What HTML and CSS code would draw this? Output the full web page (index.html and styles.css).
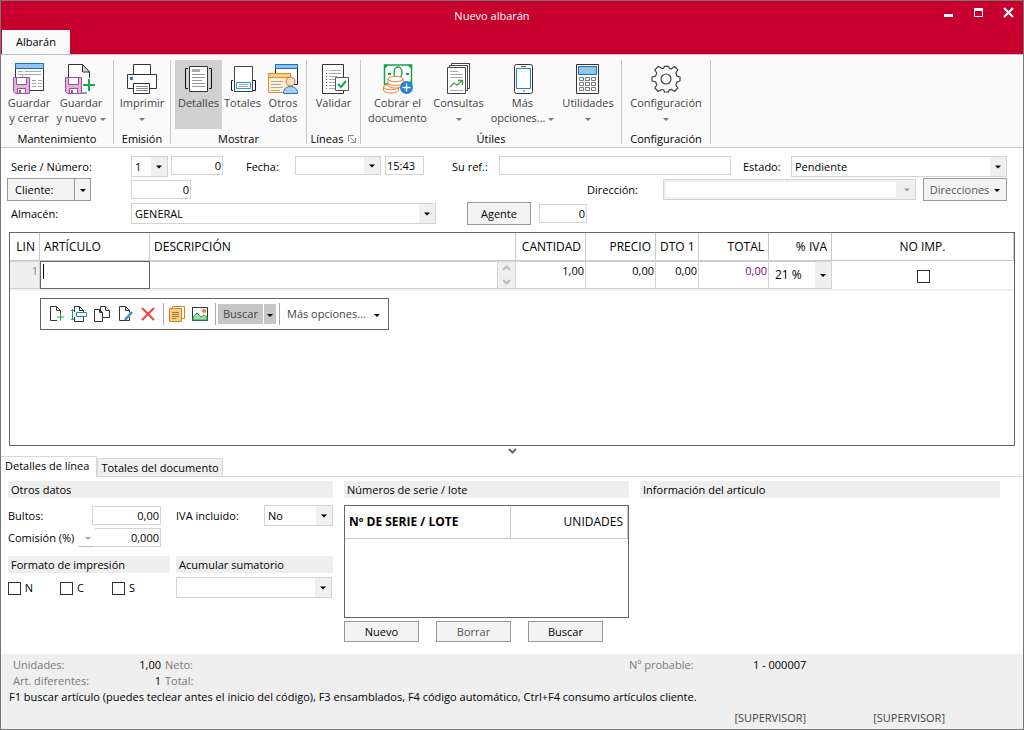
FILE: index.html
```html
<!DOCTYPE html>
<html lang="es">
<head>
<meta charset="utf-8">
<title>Nuevo albarán</title>
<link rel="stylesheet" href="styles.css">
</head>
<body>
<svg class="defs" aria-hidden="true">
  <symbol id="floppy" viewBox="0 0 17 17"><path d="M.5.5h16v16h-14l-2-2z" fill="#dfb4dd" stroke="#9b4f9b"/><path d="M3.500.5h10v7h-10z" fill="#fff" stroke="#9b4f9b"/><path d="M4.500 11.500h8v5h-8z" fill="#fff" stroke="#9b4f9b"/><path d="M6 13h2v3h-2z" fill="#9b4f9b"/></symbol>
</svg>
<div class="window">
  <header class="titlebar">
    <div class="caption">
      <h1>Nuevo albarán</h1>
      <div class="winbtns">
        <button aria-label="Minimizar"><svg width="11" height="11"><path d="M1 7h9v3H1z" fill="#fff"/></svg></button>
        <button aria-label="Maximizar"><svg width="11" height="11"><path d="M1.500 1.500h8v8h-8z" fill="none" stroke="#fff"/><path d="M1 1h9v3H1z" fill="#fff"/></svg></button>
        <button aria-label="Cerrar"><svg width="11" height="11"><path d="M1 1l9 9M10 1l-9 9" stroke="#fff" stroke-width="2.200"/></svg></button>
      </div>
    </div>
    <button class="maintab">Albarán</button>
  </header>

  <nav class="ribbon">
    <section class="group g-man">
      <div class="tools">
        <button class="tool"><svg viewBox="0 0 32 32"><path d="M2.500 1.500h28v27h-28z" fill="#fff" stroke="#333"/><path d="M2.500 1.500h28v5h-28z" fill="#8fc5ee" stroke="#1a6fb5"/><path d="M5 9.500h5M12 9.500h16M5 12.500h23M9.500 12v4M19 18.500h4M25 18.500h4M19 21.500h4M25 21.500h4M19 24.500h4M25 24.500h4" stroke="#aaa"/><use href="#floppy" x="0" y="15" width="17" height="17"/></svg><span>Guardar<br>y cerrar</span></button>
        <button class="tool"><svg viewBox="0 0 32 32"><path d="M3.500 31V2.500h14l7 7.500V31z" fill="#fff" stroke="#333"/><path d="M17.500 2.500v7.500h7z" fill="#ddd" stroke="#333"/><use href="#floppy" x="0" y="15" width="17" height="17"/><path d="M17 22h15v3H17zM22 16h4v16h-4z" fill="#fff"/><path d="M18 23h12M24 17v12" stroke="#17a84f" stroke-width="2"/></svg><span>Guardar<br>y nuevo <i class="arr"></i></span></button>
      </div>
      <h2>Mantenimiento</h2>
    </section>
    <section class="group g-emi">
      <div class="tools">
        <button class="tool"><svg viewBox="0 0 32 32"><path d="M7.500 2.500h17v10h-17zM1.500 12.500h29v14h-29z" fill="#fff" stroke="#333"/><path d="M7.500 21.500h16v10h-16z" fill="#fff" stroke="#333"/><path d="M10 24.500h12M10 26.500h12M10 28.500h12" stroke="#888"/><path d="M4 15h3v3H4z" fill="#1e83cc"/></svg><span>Imprimir<br><i class="arr"></i></span></button>
      </div>
      <h2>Emisión</h2>
    </section>
    <section class="group g-mos">
      <div class="tools">
        <button class="tool w47 active"><svg viewBox="0 0 32 32"><path d="M5 6.500H2.500v20H5M26 6.500h2.500v20H26" fill="none" stroke="#111"/><path d="M6.500 4.500h18v25h-18z" fill="#fff" stroke="#333"/><path d="M9 7h8v3H9z" fill="#aaa"/><path d="M9 12.500h13M9 15.500h13M9 18.500h10M9 21.500h13M9 24.500h13" stroke="#999"/></svg><span>Detalles</span></button>
        <button class="tool w41"><svg viewBox="0 0 32 32"><path d="M6 18.500H4.500v10H6M26 18.500h2.500v10H26" fill="none" stroke="#111"/><path d="M7.500 4.500h18v25h-18z" fill="#fff" stroke="#444"/><path d="M9.500 20.500h14v6h-14z" fill="#fff" stroke="#1e9be0"/><path d="M12 22.500h9M12 24.500h9" stroke="#aaa"/></svg><span>Totales</span></button>
        <button class="tool w40"><svg viewBox="0 0 32 32"><path d="M8.500 2.500h22v20h-22z" fill="#fff" stroke="#222"/><path d="M8.500 2.500h22v4h-22z" fill="#8fc5ee" stroke="#1a6fb5"/><path d="M1.500 11.500h22v19h-22z" fill="#fff0d5" stroke="#e08a2d"/><path d="M1.500 11.500h22v4h-22z" fill="#f9cf86" stroke="#e08a2d"/><path d="M4 19.500h12M4 22.500h10M4 25.500h12M4 28.500h9" stroke="#aaa"/><path d="M16.500 31.500c0-5 3-7 7-7s7 2 7 7z" fill="#a5cdec" stroke="#2478b5"/><circle cx="23.500" cy="19.500" r="4.500" fill="#fadfc5" stroke="#b9683a"/></svg><span>Otros<br>datos</span></button>
      </div>
      <h2>Mostrar</h2>
    </section>
    <section class="group g-lin">
      <div class="tools">
        <button class="tool"><svg viewBox="0 0 32 32"><path d="M4.500 2.500h21v29h-21z" fill="#fff" stroke="#333"/><path d="M11 8.500h12M11 11.500h12M11 14.500h8M11 17.500h7M11 20.500h7M11 23.500h7M11 26.500h9" stroke="#aaa"/><path d="M8 8h1v1H8zM8 14h1v1H8zM8 20h1v1H8zM8 26h1v1H8z" fill="#17a84f"/><path d="M8 11h1v1H8zM8 17h1v1H8zM8 23h1v1H8z" fill="#d02"/><path d="M17.500 15.500h13v13h-13z" fill="#fff" stroke="#555"/><path d="M20 22l3 3 5-6" fill="none" stroke="#17a84f" stroke-width="2"/></svg><span>Validar</span></button>
      </div>
      <h2>Líneas <svg class="launch" width="8" height="8"><path d="M.5 6V.5H6M2.500 2.500l4 4M3 7.500h4.500V3" fill="none" stroke="#888"/></svg></h2>
    </section>
    <section class="group g-uti">
      <div class="tools">
        <button class="tool w65"><svg viewBox="0 0 32 32"><path d="M2.500 3h27v19h-27z" fill="#fff" stroke="#13a04a" stroke-width="1.500"/><path d="M2.500 3h4l-4 4zM29.500 3v4l-4-4zM29.500 22v-4l-4 4z" fill="#13a04a"/><ellipse cx="16" cy="10.500" rx="4" ry="5.500" fill="#fff" stroke="#13a04a" stroke-width="1.400"/><path d="M6 11h3v2H6zM24 11h3v2h-3z" fill="#13a04a"/><g fill="#fff" stroke="#ee7d33"><path d="M1.500 25v3c0 4 15 4 15 0v-3"/><ellipse cx="9" cy="25" rx="7.500" ry="2.700"/><path d="M6 20.500v2.500c0 4 15 4 15 0v-2.500"/><path d="M6 17v3.500c0 4 15 4 15 0V17"/><ellipse cx="13.500" cy="17" rx="7.500" ry="2.700"/></g><circle cx="24.500" cy="25.500" r="6.500" fill="#1e83cc"/><path d="M20.500 25.500h8M24.500 21.500v8" stroke="#fff" stroke-width="1.500"/></svg><span>Cobrar el<br>documento</span></button>
        <button class="tool w57"><svg viewBox="0 0 32 32"><g fill="#fff" stroke="#444"><path d="M8.500 1.500h18v25h-18z"/><path d="M6.500 3.500h18v25h-18z"/><path d="M4.500 5.500h18v26h-18z"/></g><path d="M7 9.500h8M7 12.500h13M7 15.500h13M7 28.500h13" stroke="#aaa"/><path d="M7 25l4-4 3 2 5-4M15 18.500h4.500V23" fill="none" stroke="#36a537" stroke-width="1.300"/></svg><span>Consultas<br><i class="arr"></i></span></button>
        <button class="tool w71"><svg viewBox="0 0 32 32"><rect x="7.500" y="2.500" width="18" height="29" rx="2" fill="#fff" stroke="#333"/><path d="M9.500 6.500h14v20h-14z" fill="#fff" stroke="#1e83cc"/><path d="M14 4.500h5M16 29h2" stroke="#555"/></svg><span>Más<br>opciones... <i class="arr"></i></span></button>
        <button class="tool w60"><svg viewBox="0 0 32 32"><path d="M4.500 2.500h22v29h-22z" fill="#fff" stroke="#333"/><path d="M6.500 4.500h18v8h-18z" fill="#8fc5ee" stroke="#1a6fb5"/><path d="M7.500 15.500h4v3h-4zM13.500 15.500h4v3h-4zM19.500 15.500h4v3h-4zM7.500 20.500h4v3h-4zM13.500 20.500h4v3h-4zM19.500 20.500h4v3h-4zM7.500 25.500h4v3h-4zM13.500 25.500h4v3h-4zM19.500 25.500h4v3h-4z" fill="#fff" stroke="#777"/></svg><span>Utilidades<br><i class="arr"></i></span></button>
      </div>
      <h2>Útiles</h2>
    </section>
    <section class="group g-cfg">
      <div class="tools">
        <button class="tool"><svg viewBox="0 0 32 32"><g fill="#fff" stroke="#444" stroke-width="1.200"><path d="M2 15l3.500-.8 1.300-3.200-2-3 3.500-3.700 3.200 2h2.200l.8-2h4l.8 2 2.200.5 3-2.300 3.300 3.200-2 3.300 1.200 3.200 3 .8v4l-3 .8-1.200 3.200 2 3-3.300 3.500-3-2.200-2.200.5-.8 2.200h-4l-.8-2.200-2.200-.3-3.200 2-3.500-3.500 2-3-1.300-3.200L2 19z" stroke-linejoin="round"/><circle cx="16" cy="17" r="5"/></g></svg><span>Configuración<br><i class="arr"></i></span></button>
      </div>
      <h2>Configuración</h2>
    </section>
  </nav>

  <main>
    <form class="head">
      <div class="row top">
        <label class="first" for="serie">Serie / Número:</label>
        <select id="serie" class="w36"><option>1</option></select>
        <input class="num w52" aria-label="Número" value="0">
        <label class="fecha" for="fecha">Fecha:</label>
        <select id="fecha" class="w86"><option></option></select>
        <input class="w39" aria-label="Hora" value="15:43">
        <label class="ref" for="ref">Su ref.:</label>
        <input id="ref" class="grow">
        <label class="estado" for="estado">Estado:</label>
        <select id="estado" class="w216"><option>Pendiente</option></select>
      </div>
      <div class="row">
        <div class="client"><button type="button" class="btn">Cliente:</button><button type="button" class="btn drop" aria-label="Opciones de cliente"><i class="arr dark"></i></button></div>
        <input class="num w60" aria-label="Cliente" value="0">
        <label class="dir" for="dir">Dirección:</label>
        <select id="dir" class="w252" disabled><option></option></select>
        <button type="button" class="btn dim w84">Direcciones <i class="arr dark"></i></button>
      </div>
      <div class="row">
        <label class="first" for="alm">Almacén:</label>
        <select id="alm" class="w305"><option>GENERAL</option></select>
        <button type="button" class="btn agent">Agente</button>
        <input class="num w48" aria-label="Agente" value="0">
      </div>
    </form>

    <div class="lines">
      <table>
        <colgroup><col class="c30"><col class="c110"><col><col class="c18"><col class="c70"><col class="c70"><col class="c43"><col class="c70"><col class="c63"><col class="c182"></colgroup>
        <thead><tr><th class="r">LIN</th><th>ARTÍCULO</th><th colspan="2">DESCRIPCIÓN</th><th class="r">CANTIDAD</th><th class="r">PRECIO</th><th class="r">DTO 1</th><th class="r">TOTAL</th><th class="r">% IVA</th><th class="c">NO IMP.</th></tr></thead>
        <tbody><tr>
          <td class="lin r">1</td>
          <td class="edit"><input aria-label="Artículo"><i class="caret"></i></td>
          <td><input aria-label="Descripción"></td>
          <td class="spin"><svg width="9" height="24"><path d="M1 7l3.500-3.500L8 7M1 17l3.500 3.500L8 17" fill="none" stroke="#bbb" stroke-width="2"/></svg></td>
          <td class="r">1,00</td><td class="r">0,00</td><td class="r">0,00</td><td class="r purple">0,00</td>
          <td class="iva"><select aria-label="% IVA"><option>21 %</option></select></td>
          <td class="chk c"><input type="checkbox" aria-label="No imprimir"></td>
        </tr></tbody>
      </table>
      <div class="linebar">
        <button aria-label="Nueva línea"><svg viewBox="0 0 18 18"><path d="M10 15.500H3.500v-14h6l4 4V9" fill="#fff" stroke="#333"/><path d="M9.500 1.500v4h4" fill="none" stroke="#333"/><path d="M10 12h7M13.500 8.500v7" stroke="#17a84f"/></svg></button>
        <button aria-label="Insertar línea"><svg viewBox="0 0 18 18"><path d="M4.500 7V1.500h5l4 4V7M4.500 12v4.500h9V12M9.500 1.500v4h4" fill="none" stroke="#333"/><path d="M6.500 7.500h10v4h-10z" fill="#fff" stroke="#1e83cc"/><path d="M2.500 4v11M1 5.500h3M1 14.500h3" stroke="#17a84f"/></svg></button>
        <button aria-label="Duplicar línea"><svg viewBox="0 0 18 18"><path d="M7.500 1.500h5l4 4v7h-9z" fill="#fff" stroke="#333"/><path d="M1.500 4.500h5l3 3v9h-8zM12.500 1.500v4h4M6.500 4.500v3h3" fill="#fff" stroke="#333"/></svg></button>
        <button aria-label="Editar línea"><svg viewBox="0 0 18 18"><path d="M13.500 12v3.500h-10v-14h6l4 4v2" fill="#fff" stroke="#333"/><path d="M9.500 1.500v4h4" fill="none" stroke="#333"/><path d="M9 15l7-8" stroke="#3a8ed0" stroke-width="2.500"/></svg></button>
        <button aria-label="Eliminar línea"><svg viewBox="0 0 18 18"><path d="M3 3l12 12M15 3L3 15" stroke="#f0453a" stroke-width="2"/></svg></button>
        <hr>
        <button aria-label="Notas"><svg viewBox="0 0 18 18"><path d="M4.500 1.500h12v12h-12z" fill="#fff" stroke="#e07a24"/><path d="M1.500 3.500h12v13h-12z" fill="#f9cf86" stroke="#e07a24"/><path d="M4 7.500h7M4 9.500h7M4 11.500h7M4 13.500h4" stroke="#a87a35"/></svg></button>
        <button aria-label="Imagen"><svg viewBox="0 0 18 18"><path d="M1.500 2.500h15v13h-15z" fill="#fff" stroke="#333"/><path d="M2 12l4-4 4 4 3-2 3 2v3H2z" fill="#a8d5a8" stroke="#17a84f"/><circle cx="13" cy="6" r="2" fill="#ee7d33"/></svg></button>
        <hr>
        <div class="finder"><button class="find">Buscar</button><button class="find split" aria-label="Opciones de búsqueda"><i class="arr dark"></i></button></div>
        <hr>
        <button class="more">Más opciones... <i class="arr dark"></i></button>
      </div>
    </div>
    <button class="collapse" aria-label="Contraer"><svg width="9" height="6"><path d="M1 1l3.500 3.500L8 1" fill="none" stroke="#666" stroke-width="2"/></svg></button>

    <div class="tabs"><button class="on">Detalles de línea</button><button>Totales del documento</button></div>

    <div class="panels">
      <section class="col1">
        <h3>Otros datos</h3>
        <div class="fields">
          <label for="bultos">Bultos:</label><input id="bultos" class="num" value="0,00">
          <label for="ivainc" class="inc">IVA incluido:</label><select id="ivainc"><option>No</option></select>
          <div class="comm"><label for="com">Comisión (%)</label><button type="button" aria-label="Tipo de comisión"><i class="arr light"></i></button></div><input id="com" class="num open" value="0,000">
        </div>
        <div class="two">
          <div><h3>Formato de impresión</h3>
            <div class="checks"><label><input type="checkbox">N</label><label><input type="checkbox">C</label><label><input type="checkbox">S</label></div></div>
          <div><h3 id="acum">Acumular sumatorio</h3><select class="sum" aria-labelledby="acum"><option></option></select></div>
        </div>
      </section>
      <section class="col2">
        <h3>Números de serie / lote</h3>
        <div class="serial"><table><thead><tr><th><b>Nº DE SERIE / LOTE</b></th><th class="r">UNIDADES</th></tr></thead></table></div>
        <div class="btns"><button class="btn">Nuevo</button><button class="btn dim">Borrar</button><button class="btn">Buscar</button></div>
      </section>
      <section class="col3"><h3>Información del artículo</h3></section>
    </div>
  </main>

  <footer>
    <dl>
      <dt>Unidades:</dt><dd>1,00</dd><dt>Neto:</dt><dt class="prob">Nº probable:</dt><dd class="prob">1 - 000007</dd>
      <dt>Art. diferentes:</dt><dd>1</dd><dt>Total:</dt>
    </dl>
    <p>F1 buscar artículo (puedes teclear antes el inicio del código), F3 ensamblados, F4 código automático, Ctrl+F4 consumo artículos cliente.</p>
    <div class="users"><span>[SUPERVISOR]</span><span>[SUPERVISOR]</span></div>
  </footer>
</div>
</body>
</html>
```
FILE: styles.css
```css
* { box-sizing: border-box; }
body { margin: 0; background: #fff; color: #000; font: 11px/16px "Open Sans", "Noto Sans", sans-serif; white-space: nowrap; }
button, input, select { font: inherit; color: inherit; margin: 0; padding: 0; border-radius: 0; outline: 0; }
button { background: none; border: 0; }
h1, h2, h3, p, dl, dd { margin: 0; font-size: 11px; font-weight: 400; }
.defs { position: absolute; width: 0; height: 0; }
.window { display: flex; flex-direction: column; min-height: 100vh; border: 1px solid #777; }
svg { display: block; }

.titlebar { background: #c8002d; }
.caption { display: flex; align-items: center; height: 29px; padding-left: 40px; }
.caption h1 { flex: 1; text-align: center; color: #fff; }
.winbtns { display: flex; gap: 19px; padding: 0 9px 6px 0; }
.winbtns button { display: block; }
.maintab { display: block; height: 24px; margin-left: 1px; padding: 0 14px; background: #fafafa; }

.ribbon { display: flex; height: 94px; padding-top: 5px; background: #fafafa; border-top: 1px solid #c0c0c0; border-bottom: 1px solid #c8c8c8; }
.group { display: flex; flex-direction: column; height: 84px; border-right: 1px solid #c8c8c8; }
.tools { display: flex; flex: none; height: 70px; }
.group h2 { display: flex; flex: none; justify-content: center; align-items: center; gap: 5px; height: 16px; margin-top: 1px; }
.tool { display: flex; flex-direction: column; align-items: center; flex: 1 0 0; color: #444; line-height: 15px; }
.tool svg { width: 32px; height: 32px; margin: 2px 0 1px; }
.tool.active { background: #d0d0d0; height: 69px; }
.g-man { width: 113px; } .g-emi { width: 57px; } .g-mos { width: 136px; }
.g-lin { width: 54px; } .g-uti { width: 261px; } .g-cfg { width: 89px; }
.g-man .tools { padding: 0 6px 0 2px; }
.g-mos .tools, .g-uti .tools { padding-left: 4px; }
.w47, .w41, .w40, .w65, .w57, .w71, .tool.w60 { flex: none; }
.w47 { width: 47px; } .w41 { width: 41px; } .w40 { width: 40px; }
.w65 { width: 65px; } .w57 { width: 57px; } .w71 { width: 71px; }
.arr { display: inline-block; vertical-align: middle; border: 3px solid transparent; border-top-color: #777; border-bottom: 0; margin-left: 2px; }
.tool br + .arr { margin-left: 0; }
.arr.dark { border-top-color: #000; }
.arr.light { border-top-color: #aaa; }

.head { display: flex; flex-direction: column; gap: 1px; padding: 8px 16px 6px 6px; }
.row { display: flex; align-items: center; min-height: 23px; }
.row.top { align-items: flex-start; min-height: 21px; line-height: 21px; }
.first { width: 124px; padding-left: 4px; }
input, select { min-width: 0; border: 1px solid #d3d3d3; background: #fff; height: 19px; padding: 0 3px; line-height: 16px; }
select { appearance: none; height: 21px; padding: 0 18px 0 3px; background: #fff url("data:image/svg+xml,%3Csvg xmlns='http://www.w3.org/2000/svg' width='16' height='30'%3E%3Cpath d='M0 0h16v30H0z' fill='%23efefef'/%3E%3Cpath d='M5 14h6l-3 3z'/%3E%3C/svg%3E") right center no-repeat; }
select:disabled { opacity: 1; box-shadow: inset 0 0 0 2px #efefef; background-image: url("data:image/svg+xml,%3Csvg xmlns='http://www.w3.org/2000/svg' width='19' height='30'%3E%3Cpath d='M0 0h19v30H0z' fill='%23efefef'/%3E%3Cpath d='M8 14h6l-3 3z' fill='%23999'/%3E%3C/svg%3E"); }
.num { text-align: right; padding-right: 1px; }
.w36 { width: 37px; margin-right: 3px; } .w52 { width: 52px; } .w86 { width: 86px; margin-right: 4px; height: 19px; }
.w39 { width: 39px; padding: 0 1px; } .w216 { width: 216px; } .w60 { width: 60px; }
.w252 { width: 253px; margin-right: 7px; } .w84 { width: 84px; } .w305 { width: 305px; } .w48 { width: 48px; }
.fecha { width: 72px; padding-left: 23px; }
.ref { width: 75px; padding-left: 28px; }
.estado { width: 60px; padding-left: 12px; }
.grow { flex: 1; }
.btn { height: 23px; border: 1px solid #999; background: #f3f3f3; }
.btn.dim { color: #555; }
.client { display: flex; width: 124px; }
.client .btn { width: 68px; text-align: left; padding-left: 7px; }
.client .drop { width: 17px; margin-left: -1px; padding-left: 3px; }
.dir { margin-left: auto; width: 76px; }
.agent { width: 64px; margin: 0 8px 0 31px; }

.lines { flex: 1 0 212px; margin: 1px 8px 0; border: 1px solid #666; }
table { border-collapse: separate; border-spacing: 0; table-layout: fixed; width: 100%; }
th, td { padding: 0 4px; text-align: left; font-weight: 400; border-right: 1px solid #c8c8c8; }
th { height: 28px; border-bottom: 1px solid #c8c8c8; font-size: 12px; }
td { height: 28px; padding: 0 1px; vertical-align: top; line-height: 18px; border: 1px solid #d3d3d3; border-left-width: 0; }
tbody tr { box-shadow: 0 2px #efefef; }
td:last-child { border: 0; }
th.r, td.r { text-align: right; } th.c, td.c { text-align: center; }
.c30 { width: 30px; } .c110 { width: 110px; } .c18 { width: 18px; } .c70 { width: 70px; } .c43 { width: 43px; } .c63 { width: 63px; } .c182 { width: 182px; }
td.lin { background: #efefef; color: #888; }
td.edit { position: relative; border: 1px solid #666; }
.caret { position: absolute; left: 2px; top: 2px; width: 1px; height: 15px; background: #000; }
td input, td select { width: 100%; border: 0; background-color: transparent; }
td.spin { background: #efefef; padding: 1px 4px; }
.purple { color: #800080; }
td.iva { padding: 0; font-size: 12px; } td.iva select { height: 26px; padding-left: 6px; }
td.chk { vertical-align: middle; }
input[type="checkbox"] { appearance: none; width: 13px; height: 13px; border: 1px solid #333; background: #fff; padding: 0; vertical-align: middle; }
.linebar { display: inline-flex; align-items: center; height: 32px; margin: 9px 0 0 30px; padding: 0 8px 0 6px; border: 1px solid #666; color: #444; }
.linebar svg { width: 18px; height: 18px; }
.linebar button { margin-right: 5px; }
.linebar hr { width: 1px; height: 22px; margin: 0 4px 0 1px; border: 0; background: #aaa; }
.finder { display: flex; margin: 0 2px 0 -2px; }
.linebar .find { height: 20px; padding: 0 5px; margin: 0; background: #c6c6c6; }
.linebar .split { width: 13px; padding: 0; border-left: 1px solid #fff; }
.linebar .split .arr { margin: 0; }
.linebar .more { margin: 0 0 0 3px; }
.linebar .more .arr { margin-left: 5px; }
.collapse { align-self: center; height: 10px; display: flex; align-items: center; }
main { display: flex; flex-direction: column; flex: 1; }

.tabs { display: flex; align-items: flex-end; height: 21px; border-bottom: 1px solid #d8d8d8; }
.tabs button { height: 18px; padding: 0 3px; border: 1px solid #d8d8d8; border-bottom: 0; background: #f0f0f0; }
.tabs .on { height: 21px; margin-bottom: -1px; padding: 0 7px 2px 4px; background: #fff; border-left: 0; }

.panels { display: grid; grid-template-columns: 325fr 285fr 360fr; column-gap: 11px; padding: 4px 23px 12px 7px; }
h3 { height: 17px; line-height: 17px; padding-left: 3px; background: #eee; }
.fields { display: grid; grid-template-columns: 84px 69px 103px 1fr; row-gap: 2px; padding: 7px 0 9px; align-items: center; }
.fields .inc { padding-left: 15px; }
.comm { display: flex; justify-content: space-between; align-items: center; }
.comm button { width: 15px; height: 19px; border-bottom: 1px solid #bbb; margin-right: -2px; }
.fields .open { border-left: 0; margin-left: 3px; }
.two { display: grid; grid-template-columns: 162px 1fr; column-gap: 6px; }
.checks { display: flex; gap: 27px; padding-top: 7px; }
.checks label { display: flex; align-items: center; gap: 4px; width: 25px; }
.sum { width: 156px; margin-top: 4px; }
.serial { height: 113px; margin-top: 7px; border: 1px solid #666; }
.serial th { height: 33px; }
.serial th:first-child { width: 166px; }
.btns { display: flex; gap: 17px; margin-top: 3px; }
.btns .btn { width: 75px; height: 21px; }

footer { padding: 3px 8px; background: #efefef; }
dl { display: grid; grid-template-columns: 98px 50px 468px 124px 1fr; padding-left: 4px; }
dt { color: #777; }
dt:nth-of-type(2), dt:nth-of-type(5) { padding-left: 4px; }
dd { text-align: right; }
dd.prob { text-align: left; }
footer p { height: 21px; }
.users { display: flex; justify-content: flex-end; gap: 67px; padding-right: 70px; color: #444; }
```
